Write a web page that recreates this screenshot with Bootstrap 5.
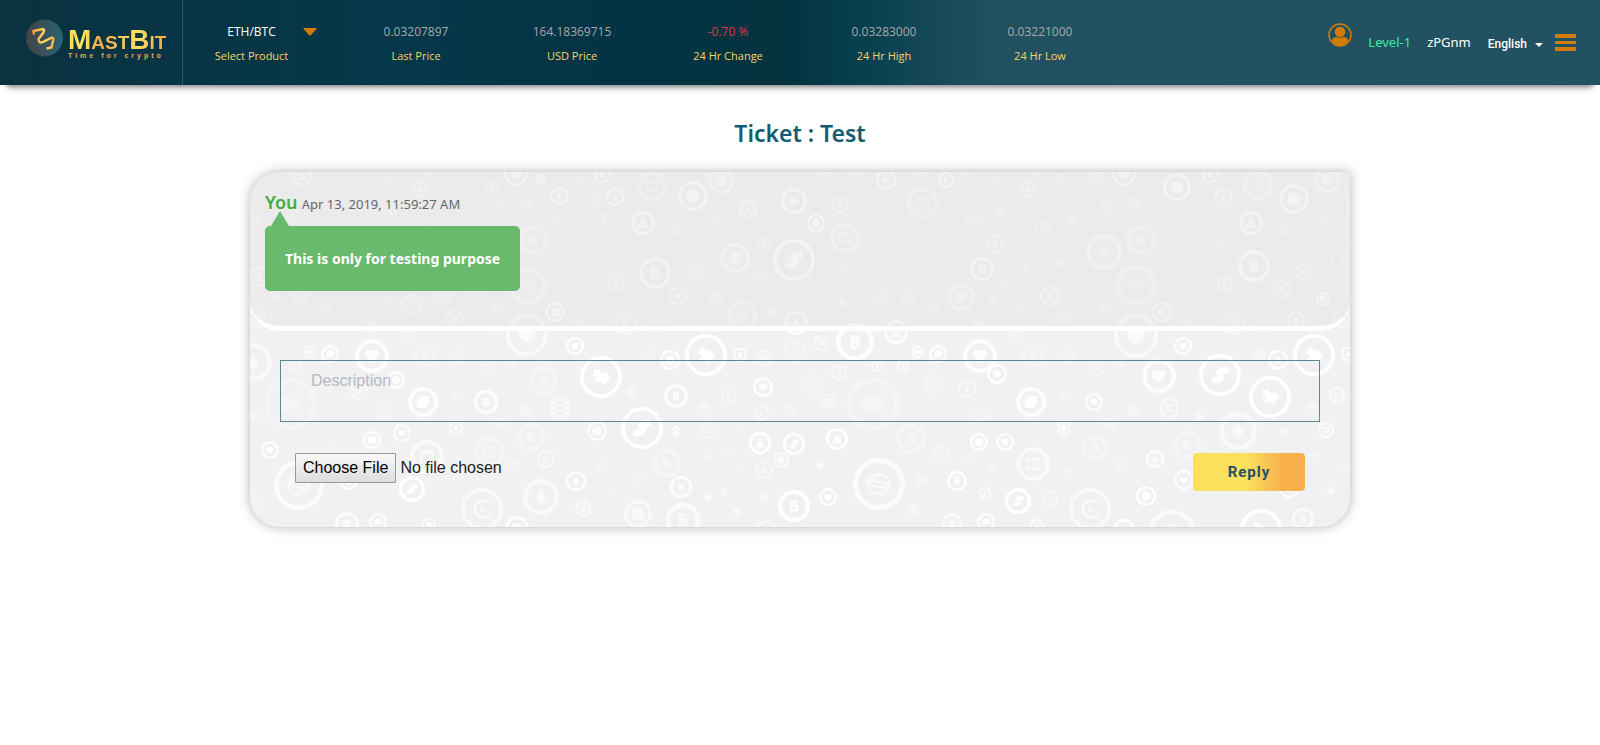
<!DOCTYPE html>
<html lang="en">
<head>
<meta charset="utf-8">
<meta name="viewport" content="width=device-width, initial-scale=1">
<title>MastBit - Ticket</title>
<link href="https://cdn.jsdelivr.net/npm/bootstrap@5.3.0/dist/css/bootstrap.min.css" rel="stylesheet">
<style>
  body { font-family: "Noto Sans", "Open Sans", sans-serif; background: #fff; }
  .topbar { min-height: 85px; padding-right: 24px; background: linear-gradient(90deg, #0a3240 0%, #04374a 25%, #04323f 49%, #07404f 54%, #215060 62%, #225161 100%); box-shadow: 0 9px 6px -7px #777; }
  .brand { width: 183px; padding: 0 0 10px 26px; border-right: 1px solid #35545e; text-decoration: none; }
  .brand-word { font: bold 19px/24px "Liberation Sans", sans-serif; color: #fbb74a; background: linear-gradient(90deg, #fbdc5c, #fde15d 18%, #f8ab47 30%, #fbc04f 50%, #fde15d 72%, #f8b14b 90%); -webkit-background-clip: text; background-clip: text; -webkit-text-fill-color: transparent; }
  .brand-word span { font-size: 28px; }
  .brand-tag { font: bold 7px/8px "Liberation Sans", sans-serif; letter-spacing: 3px; color: #f3a945; margin-top: -3px; }
  .brand-name { margin-left: 5px; padding-top: 12px; }
  .ticker { font-size: 12px; line-height: 24px; font-family: "Open Sans", sans-serif; padding: 2px 0 0 2px; }
  .ticker dd { color: #a9a9a9; margin: 0; }
  .ticker dt { color: #f7d467; font-weight: 400; font-size: 11px; }
  .product { width: 153px; padding-right: 20px; }
  .quote { width: 156px; }
  .product button { background: none; border: 0; padding: 0; color: #fff; }
  .product svg { left: 118px; top: 7px; }
  .account { font-size: 13px; }
  .account a { text-decoration: none; color: #fff; }
  .account a.level { color: #3bf0a4; }
  .lang { font: 500 12px/18px Roboto, sans-serif; color: #fff; border: 0; padding: 0; margin: 2px 12px 0 17px; }
  .lang:hover { color: #fff; }
  .lang::after { margin-left: 8px; border-width: 4px 4px 0; vertical-align: 1px; }
  .page-title { font-size: 23px; line-height: 30px; font-weight: 600; color: #135c74; margin: 33px 0 24px; }
  .ticket { max-width: 1100px; background: #f1f1f1; border-radius: 30px 0 30px 30px; box-shadow: 0 0 12px rgba(0,0,0,.3); }
  .coins { left: 0; top: 0; width: 100%; height: 100%; overflow: hidden; border-radius: inherit; pointer-events: none; }
  .thread { background: rgba(221,221,221,.3); border-bottom: 5px solid #fff; border-radius: 30px 0 30px 30px; padding: 15px 15px 35px; }
  .author { font-size: 18px; line-height: 30px; color: #45ab45; font-weight: 600; }
  .stamp { font-size: 13px; color: #666; }
  .bubble { margin-top: 9px; padding: 20px; line-height: 25px; font-size: 14px; font-weight: 700; color: #fff; background: rgba(76,175,80,.82); border-radius: 5px; }
  .bubble::before { content: ""; position: absolute; left: 6px; bottom: 100%; border: 9px solid transparent; border-top: 0; border-bottom: 15px solid rgba(76,175,80,.82); }
  .reply-form { padding: 29px 30px 36px; }
  .reply-form textarea { height: 62px; padding: 8px 30px; border: 1px solid #5b8798; border-radius: 0; background: transparent; resize: none; font: 16px/24px "Liberation Sans", sans-serif; overflow: hidden; }
  .reply-form textarea::placeholder { color: #b3bac1; }
  .actions { padding: 31px 15px 0; }
  .upload { font: 16px/24px "Liberation Sans", sans-serif; color: #222; }
  .upload::file-selector-button { font: inherit; height: 30px; padding: 1px 7px; margin-right: 4px; border: 1px solid #999; border-radius: 1px; color: #000; background: linear-gradient(#f8f8f8, #ddd); }
  .send { width: 112px; height: 38px; border: 0; border-radius: 4px; font: bold 15px/20px Roboto, sans-serif; letter-spacing: 1px; color: #225161; background: linear-gradient(90deg, #fbe05e 48%, #f7b04c 80%); }
</style>
</head>
<body class="min-vh-100">
<header class="topbar d-flex align-items-center">
  <a class="brand d-flex align-self-stretch align-items-center" href="#" aria-label="MastBit">
    <svg width="37" height="38" viewBox="0 0 37 38" aria-hidden="true">
      <defs><linearGradient id="disc"><stop stop-color="#454344"/><stop offset="1" stop-color="#2a6375"/></linearGradient>
      <linearGradient id="gold"><stop stop-color="#f5a345"/><stop offset=".6" stop-color="#fde15d"/><stop offset="1" stop-color="#f6b04b"/></linearGradient></defs>
      <circle cx="18.500" cy="19" r="18.500" fill="url(#disc)"/>
      <path d="M8 15.500 7.500 12 17 10Q19 11 17 14L12.500 20Q13 25 17 23L26 18.500Q28 19 27 22L25.500 28.500 20.500 29.500" fill="none" stroke="url(#gold)" stroke-width="2.500"/>
    </svg>
    <span class="brand-name d-flex flex-column">
      <span class="brand-word"><span>M</span>AST<span>B</span>IT</span>
      <span class="brand-tag">Time for crypto</span>
    </span>
  </a>
  <dl class="ticker d-flex text-center mb-0">
    <div class="product d-flex flex-column-reverse position-relative">
      <dt>Select Product</dt>
      <dd><button type="button">ETH/BTC<svg class="position-absolute" width="14" height="10" viewBox="0 0 14 10" aria-hidden="true"><path d="M1 1h12q1 0 .5 1L8 8q-1 1-2 0L.5 2Q0 1 1 1z" fill="#d17c07"/></svg></button></dd>
    </div>
    <div class="quote d-flex flex-column-reverse"><dt>Last Price</dt><dd>0.03207897</dd></div>
    <div class="quote d-flex flex-column-reverse"><dt>USD Price</dt><dd>164.18369715</dd></div>
    <div class="quote d-flex flex-column-reverse"><dt>24 Hr Change</dt><dd class="text-danger">-0.70 %</dd></div>
    <div class="quote d-flex flex-column-reverse"><dt>24 Hr High</dt><dd>0.03283000</dd></div>
    <div class="quote d-flex flex-column-reverse"><dt>24 Hr Low</dt><dd>0.03221000</dd></div>
  </dl>
  <nav class="account d-flex align-items-center ms-auto" aria-label="Account">
    <a class="me-3 mb-3 d-flex" href="#" aria-label="Profile">
      <svg width="24" height="24" viewBox="0 0 24 24"><circle cx="12" cy="12" r="11" fill="none" stroke="#d17c07" stroke-width="1.500"/><circle cx="12" cy="9" r="5.300" fill="#d17c07"/><path d="M4 18q0-4 5-4q3 2 6 0q5 0 5 4q-3 5-8 5t-8-5z" fill="#d17c07"/></svg>
    </a>
    <a class="level" href="#">Level-1</a>
    <a class="ms-3" href="#">zPGnm</a>
    <button class="btn lang dropdown-toggle" type="button" data-bs-toggle="dropdown">English</button>
    <a class="d-flex" href="#" aria-label="Menu"><svg width="21" height="17"><path d="M0 0h21v4H0zM0 7h21v3H0zM0 13h21v4H0z" fill="#d17c07"/></svg></a>
  </nav>
</header>

<main class="px-3">
  <h1 class="page-title text-center">Ticket : Test</h1>
  <section class="ticket position-relative mx-auto">
    <svg class="coins position-absolute" id="coins" aria-hidden="true"></svg>
    <div class="thread position-relative">
      <div><span class="author">You</span> <span class="stamp">Apr 13, 2019, 11:59:27 AM</span></div>
      <div class="bubble position-relative d-inline-block">This is only for testing purpose</div>
    </div>
    <form class="reply-form position-relative">
      <textarea class="form-control" placeholder="Description" aria-label="Description"></textarea>
      <div class="actions d-flex justify-content-between align-items-start">
        <input class="upload" type="file" aria-label="Attachment">
        <button class="send" type="submit">Reply</button>
      </div>
    </form>
  </section>
</main>

<script src="https://cdn.jsdelivr.net/npm/bootstrap@5.3.0/dist/js/bootstrap.bundle.min.js"></script>
<script>
  // Coin artwork: symbols are drawn in a box from -10 to 10 and scaled to each coin.
  const glyphs = {
    o: '<circle r="4.500"/>',
    t: '<path fill-rule="evenodd" d="M0-4 5 4H-5zM0 0-1 2H1z"/>',
    m: '<path d="M0-4.500 3 0 0 4.500-3 0z"/>',
    l: '<path d="M-2-1Q-1-4 3-4Q5-3 4-1Q2 0 0 0H-2zM2 0Q2 3-1 4Q-5 4-4 2Q-2 0 2 0z"/>',
    s: '<path d="M-4-4-2-3-1-4 0-2Q4-3 4 1L1 4 0 2-3 3-2 0-4-1-3-2z"/>',
    h: '<path d="M0-4.500 4 -2V2L0 4.500-4 2V-2z"/>',
    b: '<path fill-rule="evenodd" d="M-2-3.500H1Q3-3 2-1Q4 1 2 3.500H-2.500V-3.500zM-1-2V-1H1V-2zM-1 1V2H1V1z"/>',
    r: '<path fill-rule="evenodd" d="M-4-3.500H4V3.500H-4zM-3-2V2H3V-2z"/>',
    v: '<path d="M0 4Q-5 1-4-2Q-2-4 0-3Q3-4 4-2Q4 2 0 4z"/>',
    p: '<path d="M-4 4Q-5-4 0-4L4-4 4 0Q4 4-1 4z"/>',
    a: '<path d="M5 0-4-4-2 0-4 4z"/>',
    e: '<g fill="none" stroke="#fff" stroke-width=".6"><circle r="4"/><path d="M1-4-3-1Q4-1 5 2M-5-2Q-3 2 3 1L-1 4"/></g>',
    c: '<g fill="none" stroke="#fff" stroke-width="1.300"><path d="M3-3A4 4 0 1 0 4 2"/><path d="M0-1V2"/></g>'
  };
  // x, y, radius, opacity (percent), symbol
  const coins = `52,4,10,60,t 136,11,5,50,o 170,17,8,60,o 200,8,4,40,o 178,-3,6,80,o 242,17,7,50,o 266,2,12,90,o 291,7,5,100,o 309,24,9,80,t
    331,9,5,50,o 343,28,6,50,o 352,3,8,80,b 365,25,9,80,t 277,31,7,60,o 252,35,6,40,o 402,15,15,40,r 443,24,15,80,o 393,51,12,90,t 354,46,5,80,o
    426,57,5,80,v 308,50,5,40,o 327,45,4,20,o 5,49,6,60,o 43,45,7,40,o 141,42,6,50,o 214,48,6,30,o 181,53,5,30,o 90,17,6,15,o 283,68,15,50,b
    335,66,11,20,b 364,69,7,30,b 353,85,5,20,b 329,97,13,20,o 405,101,16,90,b 366,111,8,70,o 445,100,7,50,o 428,124,9,70,v 278,114,19,50,e 247,78,19,20,m
    119,102,13,20,o 94,105,11,20,o 101,76,9,20,o 137,72,9,20,b 26,70,7,30,o 60,66,7,20,m 8,105,10,60,o 25,124,6,60,o 50,125,7,60,b 75,136,5,60,o
    11,144,12,30,o 161,133,11,40,l 136,129,4,50,o 192,124,10,40,b 247,137,6,50,o 205,146,9,50,b 305,140,10,80,o 354,133,8,20,o 376,152,11,40,b 407,152,8,30,o
    329,150,5,60,o 119,153,7,50,o 228,120,9,20,o 277,163,21,65,v 157,162,8,20,o 246,162,5,20,o
    471,9,13,70,o 576,10,11,30,b 544,29,13,90,a 498,37,9,70,b 590,33,8,60,v 566,51,9,100,o 607,2,7,30,v 636,8,10,80,v 672,0,5,70,o 696,8,8,90,b 716,1,6,30,o
    673,31,16,40,r 619,41,8,30,t 645,40,8,30,b 699,30,6,20,o 745,11,5,50,o 778,17,8,70,o 786,-3,6,80,o 808,7,5,40,o 847,6,7,50,b 874,2,12,80,o
    859,34,7,50,o 885,31,7,70,o 465,49,5,30,o 595,66,15,50,r 724,47,8,40,o 749,42,6,50,o 695,54,8,15,o 667,63,7,20,o 708,74,7,15,o 745,72,9,60,b
    793,58,9,40,v 822,49,6,50,o 485,86,15,70,p 514,71,6,60,o 510,102,7,40,a 544,88,21,90,l 591,95,8,30,o 622,89,8,20,o 649,89,8,30,b 692,91,7,20,b
    732,97,12,90,b 775,96,4,50,o 809,91,5,70,o 854,80,18,60,m 891,68,15,50,b 886,113,20,50,e 614,109,8,20,o 667,100,4,20,o 753,110,5,70,o
    465,126,7,60,o 492,143,15,40,b 523,139,5,90,o 558,132,4,70,o 592,131,5,70,o 631,125,7,50,o 658,125,7,50,b 711,125,14,50,o 683,136,5,70,m
    743,129,4,60,o 770,136,8,30,o 800,124,10,70,b 836,120,7,30,b 813,146,9,30,o 855,137,6,50,o 546,151,12,80,t 728,153,6,70,o 886,164,22,65,v
    646,160,12,80,t 605,170,19,90,b 456,183,21,100,s 490,183,7,100,b 765,162,7,30,o
    927,15,14,80,o 960,3,8,80,b 973,25,9,70,t 1008,13,15,50,r 1044,27,15,80,o 1077,8,13,70,o 1034,57,5,80,v 1001,51,12,90,t 1072,49,5,40,o
    935,45,4,20,o 943,68,11,15,b 971,69,7,30,o 961,85,5,30,o 937,97,13,25,m 1004,94,16,90,b 975,112,8,70,o 1053,100,8,50,b 1060,73,8,30,b 1093,87,13,30,m
    1032,117,9,70,v 1073,127,7,80,o 912,140,10,80,o 937,150,5,60,o 984,152,11,40,l 1015,152,8,30,o 1046,148,9,70,m 1092,147,9,40,o 1104,37,8,80,o
    59,180,6,80,o 80,182,9,100,o 122,184,17,90,v 45,194,6,60,m 3,190,19,60,m 175,184,11,30,b 208,184,7,30,o 325,174,9,100,v 351,205,21,100,s
    146,208,9,90,o 109,219,9,50,o 77,213,9,20,o 41,232,26,35,h 173,230,15,90,p 236,230,12,90,b 204,225,4,40,o 240,197,6,40,v 264,193,4,40,o
    293,209,14,35,b 276,239,5,80,m 310,236,10,70,r 134,240,8,20,b 4,245,5,60,o 20,278,9,100,v 122,268,9,100,o 152,261,9,80,v 206,256,7,70,v
    251,252,6,50,t 281,265,14,40,b 347,259,10,80,o 84,279,8,20,t 177,285,17,70,r 239,280,15,40,r 296,287,9,60,t 265,293,6,40,o 353,295,6,40,o
    49,313,25,75,e 99,309,9,100,o 162,317,13,100,l 232,337,21,60,c 291,325,18,60,m 326,309,10,90,b 333,337,8,60,o 360,320,4,20,o 4,330,8,40,o
    97,352,12,70,v 128,350,9,80,v 179,353,7,80,o 267,356,12,90,o
    401,183,5,30,o 420,188,10,90,o 514,186,8,50,o 545,179,11,35,t 572,171,8,50,o 667,180,6,100,o 688,182,9,100,o 730,184,17,90,v
    747,202,10,100,v 627,194,6,80,m 653,194,6,80,m 381,220,6,50,o 426,224,12,90,b 479,223,8,40,b 513,215,10,100,v 560,212,11,20,v 589,201,8,50,b
    623,232,26,35,h 579,229,7,50,o 684,212,10,30,o 717,217,9,50,b 732,244,9,20,o 454,235,5,60,o 512,241,7,60,b 539,239,5,50,o
    392,256,21,100,l 426,260,5,100,o 459,259,8,40,b 489,259,6,10,o 510,271,11,100,t 544,272,11,100,l 587,267,11,100,t 661,267,15,40,b
    729,270,9,100,o 691,282,8,40,v 719,286,4,30,o 417,291,14,40,b 457,283,5,40,t 479,280,5,40,b 531,288,8,70,o 514,298,9,50,b
    571,293,4,100,o 489,297,4,30,o 389,307,8,10,o 431,315,11,80,b 458,325,4,100,o 473,319,4,70,o 514,326,4,90,o 487,339,4,100,o
    629,312,26,75,e 544,334,16,100,b 578,325,9,100,v 601,329,4,60,o 672,308,6,60,o 707,309,10,100,b 735,321,6,90,l 742,297,5,40,o
    663,337,6,60,o 388,342,14,60,o 433,348,17,70,b 516,360,12,50,o 702,351,10,80,t 736,350,9,90,v
    783,184,11,35,b 817,184,7,35,o 933,174,9,90,v 1009,183,6,50,o 1028,188,10,90,b 1064,183,21,100,s 1098,182,7,100,b
    909,204,17,80,v 970,203,21,100,l 1020,225,21,100,s 848,197,7,40,m 872,193,4,50,o 781,230,15,90,p 812,225,4,40,o 844,230,9,90,v
    884,239,5,80,b 919,236,10,60,r 949,245,4,100,o 988,259,19,60,m 1034,260,4,100,v 1087,223,8,70,r 1062,235,5,60,o 1076,258,8,80,r
    814,256,7,80,o 859,252,6,60,t 755,270,9,100,v 845,276,13,40,b 937,273,14,40,b 905,287,9,90,t 873,293,6,60,b 783,292,17,70,r
    819,298,4,50,o 934,308,10,80,v 1065,283,5,40,o 1096,297,4,40,o 1039,316,10,90,o 1081,319,4,100,o 768,329,13,100,l 800,327,8,50,r
    896,324,10,100,o 840,337,21,60,c 922,363,25,70,e 1011,358,21,100,s 1053,347,11,70,b 787,354,7,90,t 874,358,11,90,t`;
  document.getElementById('coins').innerHTML = coins.trim().split(/\s+/).map(c => {
    const [x, y, r, o, g] = c.split(',');
    const w = r > 19 ? 1.8 : 2.5;
    return `<g transform="translate(${x} ${y}) scale(${r / 10})" opacity="${o / 100}" fill="#fff"><circle r="${10 - w / 2}" fill="none" stroke="#fff" stroke-width="${w}"/>${glyphs[g]}</g>`;
  }).join('');
</script>
</body>
</html>
